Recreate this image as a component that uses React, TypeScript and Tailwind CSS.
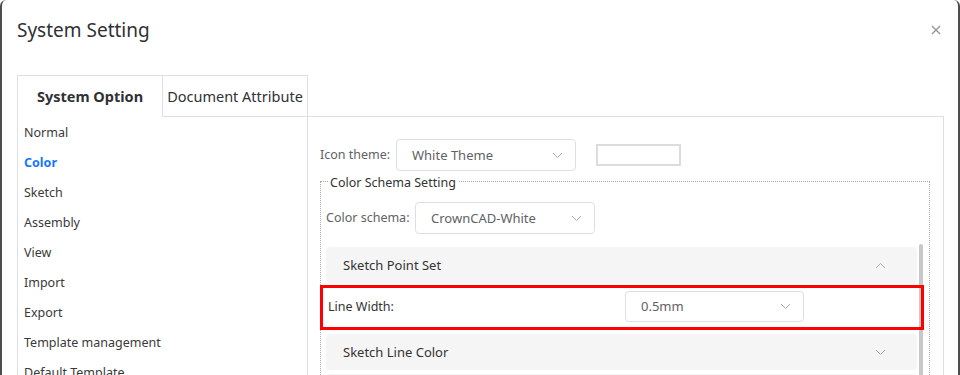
import type { ReactNode } from "react";

const SIDE_ITEMS = [
  "Normal",
  "Color",
  "Sketch",
  "Assembly",
  "View",
  "Import",
  "Export",
  "Template management",
  "Default Template"
];

function Chevron({ up = false }: { up?: boolean }) {
  return (
    <svg width="11" height="7" viewBox="0 0 11 7" className="shrink-0">
      <polyline
        points={up ? "1,6 5.5,1.5 10,6" : "1,1 5.5,5.5 10,1"}
        fill="none"
        stroke="#a8abb2"
        strokeWidth="1"
      />
    </svg>
  );
}

function SelectBox({ value, className }: { value: string; className: string }) {
  return (
    <div
      className={`flex shrink-0 items-center justify-between rounded-[4px] border border-[#dcdfe6] bg-white pl-[15px] pr-[12px] text-[13px] text-[#606266] ${className}`}
    >
      <span className="pt-[1px]">{value}</span>
      <Chevron />
    </div>
  );
}

function PanelHeader({ title, open }: { title: string; open: boolean }) {
  return (
    <div className="flex h-[36px] items-center justify-between rounded-[4px] bg-[#f5f5f5] pl-[17px] pr-[31px] text-[13px] text-[#333]">
      <span className="pt-[1px]">{title}</span>
      <Chevron up={open} />
    </div>
  );
}

function Highlight({ children }: { children: ReactNode }) {
  return (
    <div className="relative flex h-[51px] items-center pb-[4px]">
      {children}
      <span className="pointer-events-none absolute -left-[6px] -right-[7px] top-[2px] bottom-[4px] border-[3px] border-[#ff0000]" />
    </div>
  );
}

export default function App() {
  return (
    <div className="h-[375px] w-[960px] overflow-hidden rounded-t-[6px] border-x-2 border-[#4e4e4e] bg-white font-['Noto_Sans','Liberation_Sans',sans-serif]">
      <div className="flex h-[75px] items-start justify-between pl-[15px] pr-[17px] pt-[16px]">
        <h1 className="text-[19px] leading-[28px] text-[#303133]">System Setting</h1>
        <button type="button" aria-label="close" className="mt-[9px]">
          <svg width="10" height="10" viewBox="0 0 10 10">
            <path d="M1 1L9 9M9 1L1 9" stroke="#909399" strokeWidth="1.3" />
          </svg>
        </button>
      </div>

      <div className="flex pl-[15px] pr-[14px]">
        <div className="flex w-[291px] flex-col">
          <div className="flex h-[42px]">
            <div className="flex w-[145px] items-center justify-center border-l border-t border-[#dcdfe6] pt-[1px] text-[14.5px] font-bold text-[#303133]">
              System Option
            </div>
            <div className="flex w-[146px] items-center justify-center border border-[#dcdfe6] pt-[1px] text-[14.5px] text-[#303133]">
              Document Attribute
            </div>
          </div>
          <ul className="h-[300px] border-x border-[#dcdfe6] pl-[6px] pt-[1px]">
            {SIDE_ITEMS.map((item) => (
              <li
                key={item}
                className={`h-[30px] text-[12.5px] leading-[30px] ${
                  item === "Color" ? "font-bold text-[#1677ff]" : "text-[#3a3a3a]"
                }`}
              >
                {item}
              </li>
            ))}
          </ul>
        </div>

        <div className="mt-[41px] h-[300px] flex-1 border-r border-t border-[#dcdfe6] pl-[12px] pr-[13px] pt-[22px]">
          <div className="flex items-center">
            <span className="w-[76px] pt-[1px] text-[12.5px] text-[#606266]">Icon theme:</span>
            <SelectBox value="White Theme" className="h-[32px] w-[180px]" />
            <span className="ml-[20px] h-[22px] w-[85px] border-2 border-[#dcdcdc]" />
          </div>

          <fieldset className="mt-[1px] border border-dotted border-[#aaa] px-[5px]">
            <legend className="ml-[2px] px-[2px] text-[12.5px] leading-[18px] text-[#333]">
              <span className="inline-block translate-y-[2px]">Color Schema Setting</span>
            </legend>
            <div className="mt-[12px] flex items-center">
              <span className="w-[89px] pt-[1px] text-[12.5px] text-[#606266]">Color schema:</span>
              <SelectBox value="CrownCAD-White" className="h-[32px] w-[180px]" />
            </div>

            <div className="mt-[10px] flex gap-[2px]">
              <div className="w-[591px] pt-[3px]">
                <PanelHeader title="Sketch Point Set" open />
                <Highlight>
                  <span className="w-[299px] pl-[2px] pt-[1px] text-[12.5px] text-[#333]">Line Width:</span>
                  <SelectBox value="0.5mm" className="h-[31px] w-[179px]" />
                </Highlight>
                <PanelHeader title="Sketch Line Color" open={false} />
                <div className="mt-[4px] h-[36px] rounded-[4px] bg-[#f5f5f5]" />
              </div>
              <div className="h-[140px] w-[4px] rounded-t-[2px] bg-[#c8c8c8]" />
            </div>
          </fieldset>
        </div>
      </div>
    </div>
  );
}
